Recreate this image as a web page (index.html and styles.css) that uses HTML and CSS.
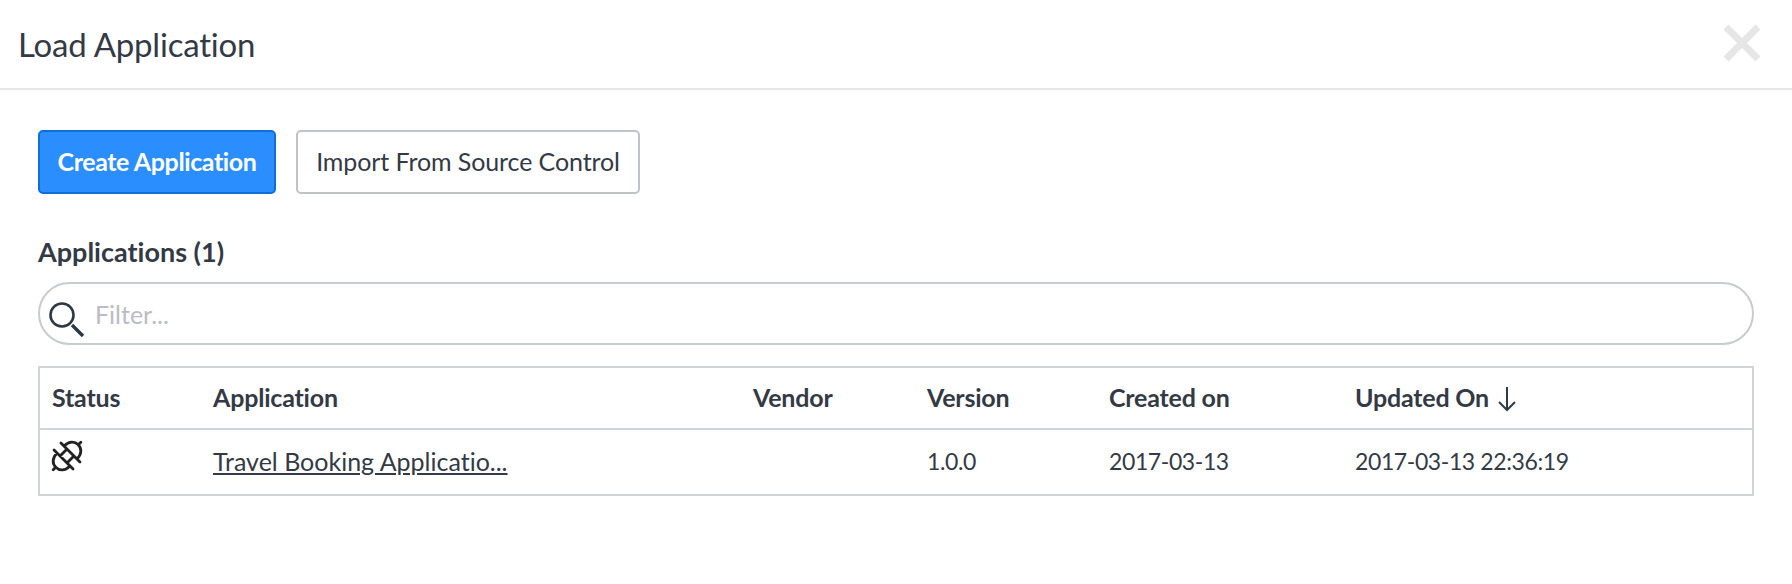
FILE: index.html
```html
<!DOCTYPE html>
<html lang="en">
<head>
<meta charset="utf-8">
<title>Load Application</title>
<link rel="stylesheet" href="styles.css">
</head>
<body>
<header class="modal-header">
  <h1 class="modal-title">Load Application</h1>
  <svg class="close" viewBox="0 0 38 38" aria-label="Close"><path d="M3 3 L35 35 M35 3 L3 35"/></svg>
</header>
<main class="modal-body">
  <div class="actions">
    <button class="btn btn-primary">Create Application</button>
    <button class="btn btn-default">Import From Source Control</button>
  </div>
  <h2 class="section-title">Applications (1)</h2>
  <div class="filter">
    <svg class="search" viewBox="0 0 36 38"><circle cx="13" cy="15" r="11.5"/><path class="handle" d="M23 25 L34 36"/></svg>
    <span class="placeholder">Filter...</span>
  </div>
  <table class="apps">
    <colgroup><col class="c1"><col class="c2"><col class="c3"><col class="c4"><col class="c5"><col class="c6"></colgroup>
    <thead>
      <tr><th>Status</th><th>Application</th><th>Vendor</th><th>Version</th><th>Created on</th><th>Updated On <svg class="arrow" viewBox="0 0 20 26"><path d="M10 1 V24 M2 16 L10 24 L18 16"/></svg></th></tr>
    </thead>
    <tbody>
      <tr>
        <td><svg class="plug" viewBox="-18 -18 36 36"><g transform="rotate(-45)"><path d="M-4 -11 V11 M4 -11 V11 M-4 -4 H4 M-4 4 H4 M-4 -7.5 C-10 -7.5 -13 -4 -13 0 C-13 4 -10 7.5 -4 7.5 M4 -7.5 C10 -7.5 13 -4 13 0 C13 4 10 7.5 4 7.5 M-13 0 H-16 M13 0 H16"/></g></svg></td>
        <td><a href="#" class="app-link">Travel Booking Applicatio...</a></td>
        <td></td>
        <td class="num">1.0.0</td>
        <td class="num">2017-03-13</td>
        <td class="num">2017-03-13 22:36:19</td>
      </tr>
    </tbody>
  </table>
</main>
</body>
</html>
```

FILE: styles.css
```css
* { box-sizing: border-box; }
html, body { margin: 0; padding: 0; background: #fff; }
body { width: 1792px; height: 584px; overflow: hidden; font-family: "Lato", "Liberation Sans", sans-serif; font-variant-ligatures: none; color: #333a45; font-size: 25px; }
.modal-header { height: 90px; border-bottom: 2px solid #e6e6e6; display: flex; align-items: center; justify-content: space-between; padding: 0 31px 0 18px; }
.modal-title { margin: 0; font-size: 33px; font-weight: 400; letter-spacing: -0.2px; }
.close { width: 38px; height: 38px; margin-top: -2px; }
.close path { stroke: #e6e6e6; stroke-width: 7; fill: none; }
.modal-body { padding: 40px 38px 0; }
.actions { display: flex; gap: 20px; }
.btn { height: 64px; border-radius: 5px; font-family: inherit; font-size: 25px; font-variant-ligatures: none; padding: 0 0 2px; }
.btn-primary { width: 238px; background: #2b8eff; border: 2px solid #0f6fd6; color: #fff; font-weight: 700; letter-spacing: -0.4px; }
.btn-default { width: 344px; background: #fff; border: 2px solid #bfc3c8; color: #333a45; letter-spacing: -0.1px; }
.section-title { margin: 44px 0 0; font-size: 27px; line-height: 28px; font-weight: 700; letter-spacing: 0; }
.filter { margin-top: 16px; height: 63px; border: 2px solid #c8cbcf; border-radius: 32px; display: flex; align-items: center; padding-left: 9px; gap: 10px; }
.search { width: 36px; height: 38px; align-self: flex-start; margin-top: 16px; }
.search circle { fill: none; stroke: #2e3744; stroke-width: 2.6; }
.search .handle { fill: none; stroke: #2e3744; stroke-width: 3.4; }
.placeholder { color: #b9bdc3; font-size: 25px; }
.apps { margin-top: 21px; width: 1714px; border-collapse: collapse; table-layout: fixed; border: 2px solid #d0d3d7; }
.c1 { width: 162px; } .c2 { width: 540px; } .c3 { width: 174px; } .c4 { width: 182px; } .c5 { width: 246px; } .c6 { width: 410px; }
.apps th, .apps td { padding: 0 0 0 12px; text-align: left; vertical-align: middle; font-size: 25px; white-space: nowrap; }
.apps th { height: 62px; padding-bottom: 3px; font-weight: 700; border-bottom: 2px solid #d0d3d7; letter-spacing: -0.2px; }
.apps td { height: 66px; padding-bottom: 2px; }
.apps td.num { font-size: 23px; letter-spacing: -0.4px; }
.app-link { color: #333a45; text-decoration: underline; }
.arrow { width: 20px; height: 26px; vertical-align: -5px; margin-left: 2px; }
.arrow path { fill: none; stroke: #333a45; stroke-width: 2; }
.plug { width: 44px; height: 44px; display: block; margin: -10px 0 0 -7px; }
.plug path { fill: none; stroke: #222; stroke-width: 2.3; stroke-linecap: round; }
```
